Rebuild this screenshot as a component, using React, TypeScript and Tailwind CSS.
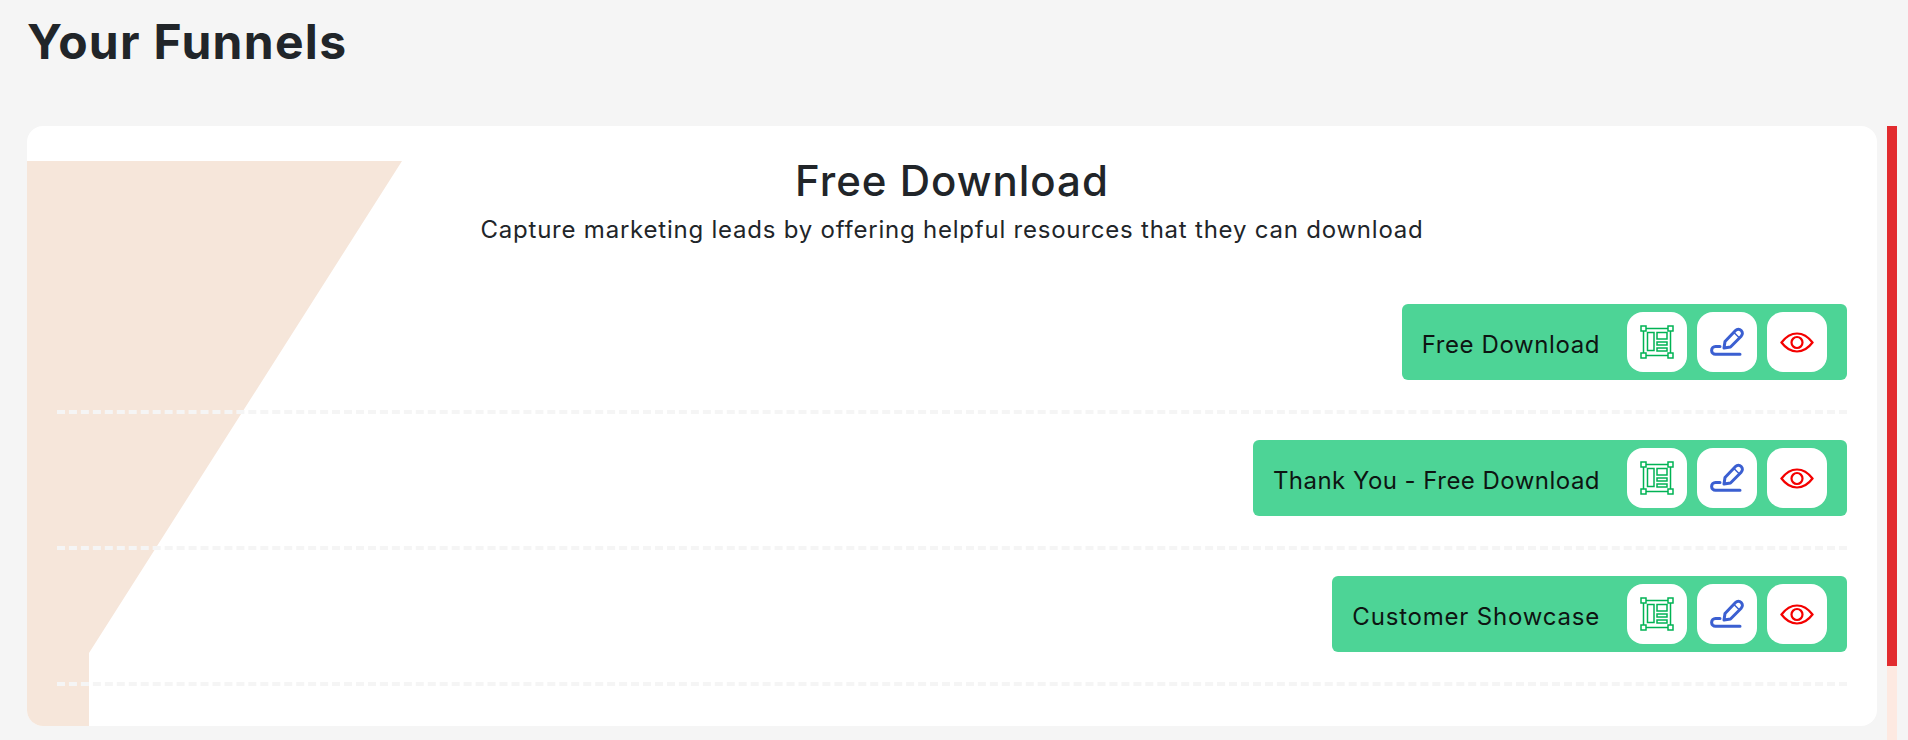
const rows = [
  { name: 'Free Download', spacing: 'tracking-[0.6px]' },
  { name: 'Thank You - Free Download', spacing: 'tracking-[0.47px]' },
  { name: 'Customer Showcase', spacing: 'tracking-[0.8px]' },
];

function LayoutIcon() {
  const handles = [[2, 2], [29, 2], [2, 29], [29, 29]];
  return (
    <svg width="36" height="36" viewBox="0 0 36 36" fill="none" stroke="#00b354" strokeWidth="1.5">
      <rect x="4.5" y="4.5" width="27" height="27" />
      <rect x="8.5" y="8.5" width="6.5" height="18" />
      <rect x="18" y="8.5" width="10" height="6.5" />
      <rect x="18" y="18" width="10" height="3" />
      <rect x="18" y="24" width="10" height="3" />
      {handles.map(([x, y]) => (
        <rect key={`${x}-${y}`} x={x} y={y} width="5" height="5" fill="#fff" strokeWidth="1.5" />
      ))}
    </svg>
  );
}

function PenIcon() {
  return (
    <svg width="36" height="36" viewBox="0 0 36 36" fill="none" stroke="#3b5fd1" strokeWidth="3" strokeLinecap="round" strokeLinejoin="round">
      <path d="M31 30.3H6.5a3.9 3.9 0 0 1 0-7.8H11" />
      <path d="M15 24l1-6.5L26.5 6.5a4 4 0 0 1 5.7 5.7L21.5 23z" />
      <path d="M25 8.5l5.5 5.5" strokeWidth="1.5" />
    </svg>
  );
}

function EyeIcon() {
  return (
    <svg width="36" height="36" viewBox="0 0 36 36" fill="none" stroke="#f40000" strokeWidth="2.2">
      <path d="M2.5 18.5C7 12.5 12 9.5 18 9.5s11 3 15.5 9C29 24.5 24 27.5 18 27.5S7 24.5 2.5 18.5z" />
      <circle cx="18" cy="18.5" r="5.5" />
    </svg>
  );
}

function ActionButton({ children }: { children: React.ReactNode }) {
  return <div className="flex h-[60px] w-[60px] items-center justify-center rounded-2xl bg-white">{children}</div>;
}

export default function App() {
  return (
    <div className="h-screen overflow-hidden bg-[#f5f5f5] pl-[27px] pr-[11px] text-[#212529] [font-family:Inter,'Liberation_Sans',sans-serif]">
      <h1 className="flex h-[126px] items-start pt-[13px] text-[48px] leading-[58px] font-bold tracking-[1.3px]">Your Funnels</h1>

      <div className="flex items-start gap-[10px]">
        <main className="relative h-[600px] flex-1 overflow-hidden rounded-2xl bg-white">
          <svg className="absolute top-0 left-0" width="376" height="600" fill="#f6e6da">
            <polygon points="0,35 375,35 62,527 62,600 0,600" />
          </svg>

          <div className="relative">
            <div className="pt-[26px] text-center">
              <h2 className="text-[42px] leading-[58px] font-medium tracking-[1px]">Free Download</h2>
              <p className="mt-[2px] text-[24px] leading-[36px] tracking-[0.78px]">Capture marketing leads by offering helpful resources that they can download</p>
            </div>

            <div className="mt-[56px] px-[30px]">
              {rows.map((row) => (
                <div key={row.name} className="mb-[26px] flex justify-end border-b-4 border-dashed border-[#f5f5f5] pb-[30px]">
                  <div className="flex h-[76px] items-center gap-[10px] rounded-md bg-[#4dd496] px-[20px]">
                    <span className={`mr-[17px] pt-[6px] text-[24px] text-[#0d1512] ${row.spacing}`}>{row.name}</span>
                    <ActionButton><LayoutIcon /></ActionButton>
                    <ActionButton><PenIcon /></ActionButton>
                    <ActionButton><EyeIcon /></ActionButton>
                  </div>
                </div>
              ))}
            </div>
          </div>
        </main>

        <div className="h-[640px] w-[10px] bg-[#fde9e1]">
          <div className="h-[540px] bg-[#e22c2f]" />
        </div>
      </div>
    </div>
  );
}
